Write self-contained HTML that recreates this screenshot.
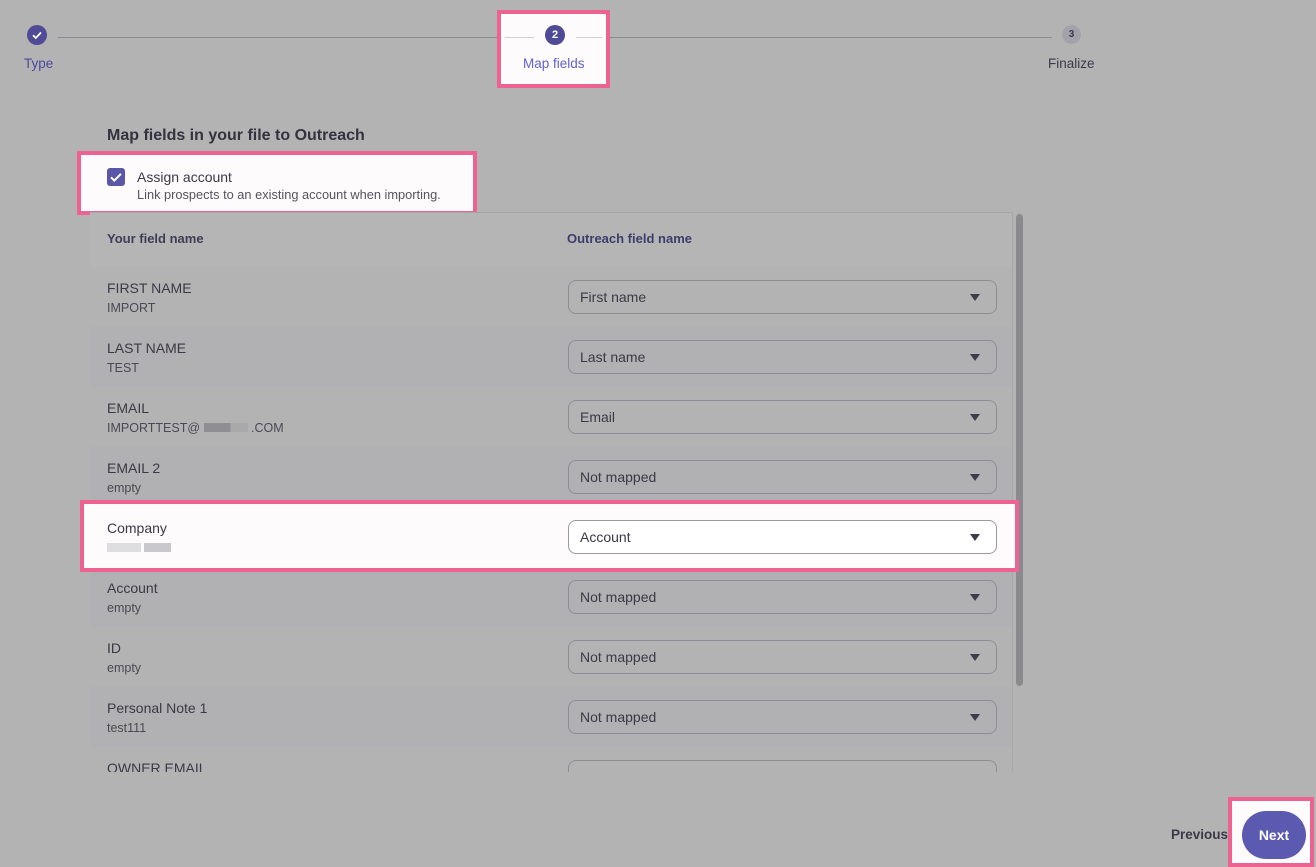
<!DOCTYPE html>
<html><head><style>
body{margin:0;width:1316px;height:867px;background:#b4b3b4;font-family:"Liberation Sans",sans-serif;position:relative;overflow:hidden;color:#3a3946}
.abs{position:absolute}
.line{position:absolute;height:1px;background:#8c8a9a;top:37px}
.circ{position:absolute;width:20px;height:20px;border-radius:50%;background:#4f4b96;color:#fff;font-size:11px;font-weight:bold;text-align:center;line-height:20px}
.row{position:absolute;left:90px;width:922px;height:60px}
.row .n{position:absolute;left:17px;top:13px;font-size:14px;color:#3a3946}
.row .v{position:absolute;left:17px;top:34px;font-size:12.5px;color:#4a4955}
.sel{position:absolute;left:478px;top:13px;width:416px;height:32px;border:1px solid #8e8d96;border-radius:8px;font-size:14px;line-height:32px;padding-left:11px;box-sizing:content-box}
.sel:after{content:"";position:absolute;right:16px;top:13px;border-left:5.5px solid transparent;border-right:5.5px solid transparent;border-top:7px solid #3d3c4a}
.pink{position:absolute;border:4px solid #ee6291;box-sizing:border-box}
</style></head><body>
<div class="line" style="left:58px;width:476px"></div>
<div class="line" style="left:576px;width:476px"></div>
<div class="circ" style="left:27px;top:25px"><svg width="20" height="20"><path d="M6 10.2l2.8 2.8L14 7.5" stroke="#fff" stroke-width="1.8" fill="none"/></svg></div>
<div class="abs" style="left:24px;top:56px;font-size:13.5px;color:#4c48a0">Type</div>
<div class="pink" style="left:497px;top:10px;width:113px;height:78px;background:#fdfbfb"></div>
<div class="line" style="left:505px;width:29px;background:#d0cfd4"></div>
<div class="line" style="left:576px;width:26px;background:#d0cfd4"></div>
<div class="circ" style="left:545px;top:25px">2</div>
<div class="abs" style="left:523px;top:56px;font-size:13.5px;color:#6360cc">Map fields</div>
<div class="circ" style="left:1062px;top:25px;background:#a3a2ab;color:#3a3946;width:19px;height:19px;line-height:19px;font-size:10px">3</div>
<div class="abs" style="left:1048px;top:56px;font-size:13.5px;color:#3a3946">Finalize</div>
<div class="abs" style="left:107px;top:127px;font-size:16px;font-weight:bold;color:#33323f">Map fields in your file to Outreach</div>
<div class="pink" style="left:77px;top:151px;width:400px;height:64px;background:#fdfbfb"></div>
<div class="abs" style="left:107px;top:168px;width:18px;height:18px;border-radius:3px;background:#5a57a8"><svg width="18" height="18"><path d="M4 9.3l3.3 3.3L14 5.8" stroke="#fff" stroke-width="2" fill="none"/></svg></div>
<div class="abs" style="left:137px;top:169px;font-size:14px;color:#3a3946">Assign account</div>
<div class="abs" style="left:137px;top:187px;font-size:12.8px;color:#55545f">Link prospects to an existing account when importing.</div>
<div class="abs" style="left:90px;top:212px;width:922px;height:54px;background:#b6b5b6;border-top:1px solid #a5a4a8;border-bottom:1px solid #a2a1a5"></div>
<div class="abs" style="left:107px;top:231px;font-size:13px;font-weight:bold;color:#3d3c55">Your field name</div>
<div class="abs" style="left:567px;top:231px;font-size:13px;font-weight:bold;color:#3d3c6a">Outreach field name</div>
<div class="abs" style="left:1012px;top:212px;width:1px;height:560px;background:#a8a7aa"></div>
<div class="abs" style="left:1016px;top:214px;width:7px;height:472px;border-radius:4px;background:#8a898c"></div>
<div class="row" style="top:267px;background:#b4b3b4"><div class="n">FIRST NAME</div><div class="v">IMPORT</div><div class="sel">First name</div></div>
<div class="row" style="top:327px;background:#b1b0b2"><div class="n">LAST NAME</div><div class="v">TEST</div><div class="sel">Last name</div></div>
<div class="row" style="top:387px;background:#b4b3b4"><div class="n">EMAIL</div><div class="v">IMPORTTEST@ <span style="display:inline-block;width:44px;height:9px;background:linear-gradient(90deg,#8f8e93 0,#8f8e93 60%,#a9a8ab 60%)"></span> .COM</div><div class="sel">Email</div></div>
<div class="row" style="top:447px;background:#b1b0b2"><div class="n">EMAIL 2</div><div class="v">empty</div><div class="sel">Not mapped</div></div>
<div class="row" style="top:567px;background:#b1b0b2"><div class="n">Account</div><div class="v">empty</div><div class="sel">Not mapped</div></div>
<div class="pink" style="left:80px;top:500px;width:939px;height:72px;background:#fdfbfb"></div>
<div class="row" style="top:507px"><div class="n">Company</div><div class="v"><span style="display:inline-block;width:34px;height:9px;background:#dedde0"></span> <span style="display:inline-block;width:27px;height:9px;background:#c9c8cc"></span></div><div class="sel" style="background:#fff;border-color:#9a99a2">Account</div></div>
<div class="row" style="top:627px;background:#b4b3b4"><div class="n">ID</div><div class="v">empty</div><div class="sel">Not mapped</div></div>
<div class="row" style="top:687px;background:#b1b0b2"><div class="n">Personal Note 1</div><div class="v">test111</div><div class="sel">Not mapped</div></div>
<div class="row" style="top:747px;height:25px;overflow:hidden;background:#b4b3b4"><div class="n">OWNER EMAIL</div><div class="sel"></div></div>
<div class="abs" style="left:1171px;top:827px;font-size:13.5px;font-weight:bold;color:#3a3946">Previous</div>
<div class="pink" style="left:1228px;top:797px;width:86px;height:70px;background:#fdfbfb"></div>
<div class="abs" style="left:1242px;top:811px;width:64px;height:48px;border-radius:24px;background:#5c59b0;color:#fff;font-size:14px;font-weight:bold;text-align:center;line-height:48px">Next</div>
</body></html>
